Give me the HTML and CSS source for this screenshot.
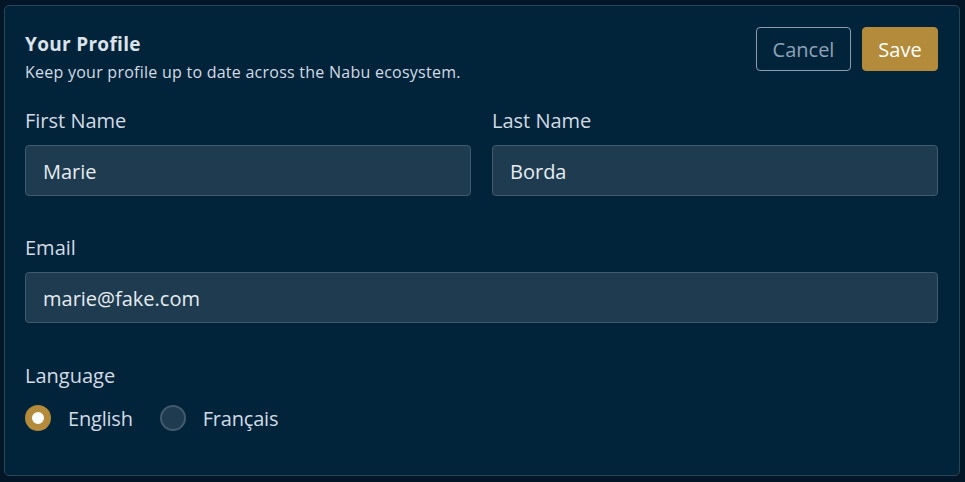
FILE: index.html
```html
<!DOCTYPE html>
<html lang="en">
<head>
<meta charset="utf-8">
<title>Your Profile</title>
<link rel="stylesheet" href="styles.css">
</head>
<body>
<div class="card">
  <div class="header">
    <div class="heading">
      <h1 class="title">Your Profile</h1>
      <p class="subtitle">Keep your profile up to date across the Nabu ecosystem.</p>
    </div>
    <div class="actions">
      <button class="btn btn-cancel" type="button">Cancel</button>
      <button class="btn btn-save" type="button">Save</button>
    </div>
  </div>
  <div class="row names">
    <div class="field">
      <label class="label">First Name</label>
      <div class="input">Marie</div>
    </div>
    <div class="field">
      <label class="label">Last Name</label>
      <div class="input">Borda</div>
    </div>
  </div>
  <div class="field email">
    <label class="label">Email</label>
    <div class="input">marie@fake.com</div>
  </div>
  <div class="field language">
    <label class="label">Language</label>
    <div class="radios">
      <div class="radio"><span class="dot checked"></span><span class="radio-label">English</span></div>
      <div class="radio"><span class="dot"></span><span class="radio-label">Français</span></div>
    </div>
  </div>
</div>
</body>
</html>
```
FILE: styles.css
```css
html, body {
  margin: 0;
  height: 100%;
}
body {
  background: #031627;
  font-family: "Open Sans", "Noto Sans", sans-serif;
  color: #d3dbe3;
  padding: 5px 5px 6px 4px;
  box-sizing: border-box;
}
.card {
  background: #02243b;
  border: 1px solid #2c4457;
  border-radius: 5px;
  height: 100%;
  box-sizing: border-box;
  padding: 21px 21px 0 20px;
}
.header {
  display: flex;
  justify-content: space-between;
  align-items: flex-start;
}
.title {
  margin: 4px 0 0;
  font-size: 19px;
  font-weight: 700;
  letter-spacing: 0.3px;
  line-height: 26px;
  color: #dbe2e9;
}
.subtitle {
  margin: 4px 0 0;
  font-size: 16px;
  letter-spacing: 0.25px;
  line-height: 22px;
  color: #d3dbe3;
}
.actions {
  display: flex;
  gap: 11px;
}
.btn {
  font-family: inherit;
  font-size: 20px;
  height: 44px;
  border-radius: 4px;
  padding: 0;
  cursor: pointer;
}
.btn-cancel {
  background: transparent;
  border: 1px solid #8b9cae;
  color: #8ea3b8;
  width: 95px;
}
.btn-save {
  background: #b38b3a;
  border: 1px solid #b38b3a;
  color: #ffffff;
  width: 76px;
}
.row {
  display: flex;
  gap: 21px;
}
.row .field {
  flex: 1;
}
.names {
  margin-top: 25px;
}
.email {
  margin-top: 39px;
}
.language {
  margin-top: 40px;
}
.label {
  display: block;
  font-size: 20px;
  line-height: 26px;
  margin-bottom: 11px;
  color: #d3dbe3;
}
.input {
  height: 51px;
  box-sizing: border-box;
  background: #1e3b4f;
  border: 1px solid #415a6d;
  border-radius: 4px;
  padding: 1px 17px 0;
  font-size: 20px;
  display: flex;
  align-items: center;
  color: #e6ecf1;
}
.radios {
  display: flex;
  align-items: center;
  gap: 27px;
  height: 28px;
  margin-top: 15px;
}
.radio {
  display: flex;
  align-items: center;
  gap: 17px;
}
.dot {
  width: 26px;
  height: 26px;
  box-sizing: border-box;
  border-radius: 50%;
  background: #1e3b4f;
  border: 2px solid #415a6d;
  display: inline-block;
}
.dot.checked {
  background: #ffffff;
  border: 7px solid #b38b3a;
}
.radio-label {
  font-size: 20px;
  letter-spacing: -0.2px;
  color: #d3dbe3;
}
```
